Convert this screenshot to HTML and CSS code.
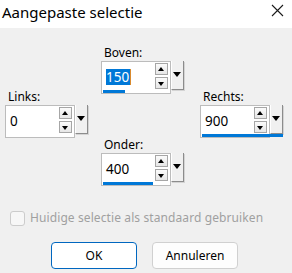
FILE: index.html
```html
<!DOCTYPE html>
<html lang="nl">

<head>
    <meta charset="UTF-8">
    <meta name="viewport" content="width=device-width, initial-scale=1.0">
    <title>Aangepaste selectie</title>
    <link rel="stylesheet" href="styles.css">
</head>

<body>
    <div class="dialog">
        <div class="titlebar">
            <span class="title">Aangepaste selectie</span>
            <svg class="close" width="13" height="13" viewBox="0 0 13 13">
                <path d="M1 1 L12 12 M12 1 L1 12" stroke="#1b1b1b" stroke-width="1.1" fill="none" />
            </svg>
        </div>
        <div class="content">
            <div class="fields">
                <div class="field field-top">
                    <span class="field-label">Boven:</span>
                    <div class="spin">
                        <div class="spin-box">
                            <span class="spin-value"><span class="selected">150</span><i class="caret"></i></span>
                            <div class="spin-arrows">
                                <span class="arrow arrow-up"></span>
                                <span class="arrow arrow-down"></span>
                            </div>
                        </div>
                        <span class="spin-drop"></span>
                        <span class="spin-bar" style="width: 22px"></span>
                    </div>
                </div>
                <div class="field field-left">
                    <span class="field-label">Links:</span>
                    <div class="spin">
                        <div class="spin-box">
                            <span class="spin-value">0</span>
                            <div class="spin-arrows">
                                <span class="arrow arrow-up"></span>
                                <span class="arrow arrow-down"></span>
                            </div>
                        </div>
                        <span class="spin-drop"></span>
                    </div>
                </div>
                <div class="field field-right">
                    <span class="field-label">Rechts:</span>
                    <div class="spin">
                        <div class="spin-box">
                            <span class="spin-value">900</span>
                            <div class="spin-arrows">
                                <span class="arrow arrow-up"></span>
                                <span class="arrow arrow-down"></span>
                            </div>
                        </div>
                        <span class="spin-drop"></span>
                        <span class="spin-bar" style="width: 81px"></span>
                    </div>
                </div>
                <div class="field field-bottom">
                    <span class="field-label">Onder:</span>
                    <div class="spin">
                        <div class="spin-box">
                            <span class="spin-value">400</span>
                            <div class="spin-arrows">
                                <span class="arrow arrow-up"></span>
                                <span class="arrow arrow-down"></span>
                            </div>
                        </div>
                        <span class="spin-drop"></span>
                        <span class="spin-bar" style="width: 50px"></span>
                    </div>
                </div>
            </div>
            <label class="check">
                <span class="check-box"></span>
                Huidige selectie als standaard gebruiken
            </label>
            <div class="buttons">
                <button class="btn btn-primary">OK</button>
                <button class="btn">Annuleren</button>
            </div>
        </div>
    </div>
</body>

</html>
```

FILE: styles.css
```css
body {
    margin: 0;
    font-family: "Noto Sans", "Liberation Sans", sans-serif;
    color: #000;
}

.dialog {
    width: 292px;
    height: 273px;
    background: #f0f0f0;
    overflow: hidden;
}

.titlebar {
    height: 28px;
    background: #fff;
    display: flex;
    justify-content: space-between;
    align-items: center;
    padding: 0 8px 0 2px;
}

.title {
    font-size: 15px;
    line-height: 20px;
    margin-top: -4px;
    color: #000;
}

.close {
    margin-top: -8px;
}

.content {
    padding-top: 17px;
}

/* spin fields */
.fields {
    display: grid;
    grid-template-columns: 96px 99px 83px;
    grid-template-rows: 44px 48px auto;
    padding-left: 5px;
}

.field-top {
    grid-column: 2;
    grid-row: 1 / span 2;
}

.field-left {
    grid-column: 1;
    grid-row: 2 / span 2;
}

.field-right {
    grid-column: 3;
    grid-row: 2 / span 2;
}

.field-bottom {
    grid-column: 2;
    grid-row: 3;
}

.field-label {
    display: block;
    font-size: 12px;
    line-height: 15px;
    padding-left: 3px;
    margin-bottom: 1px;
}

.spin {
    position: relative;
    display: flex;
    width: 83px;
    height: 33px;
}

.spin-box {
    height: 31px;
    background: #fff;
    border: 1px solid #bcbcbc;
    display: flex;
    align-items: center;
    justify-content: space-between;
    padding: 0 2px 0 4px;
    box-sizing: content-box;
    width: 64px;
}

.spin-value {
    font-size: 13.5px;
    line-height: 16px;
    display: flex;
    align-items: center;
    margin-top: -1px;
}

.selected {
    background: #0078d7;
    color: #fff;
    padding: 0 1px 0 0;
}

.caret {
    display: inline-block;
    width: 1px;
    height: 16px;
    background: #d98a2e;
}

.spin-arrows {
    display: flex;
    flex-direction: column;
    gap: 2px;
    margin-top: -3px;
}

.arrow {
    position: relative;
    width: 11px;
    height: 10px;
    border: 1px solid #a6a6a6;
    background: linear-gradient(#fbfbfb, #e6e6e6);
}

.arrow::after {
    content: "";
    position: absolute;
    left: 2px;
    border-left: 3.5px solid transparent;
    border-right: 3.5px solid transparent;
}

.arrow-up::after {
    top: 3px;
    border-bottom: 4px solid #000;
}

.arrow-down::after {
    top: 4px;
    border-top: 4px solid #000;
}

.spin-drop {
    position: relative;
    width: 11px;
    height: 28px;
    background: #f0f0f0;
    border-left: 1px solid #fff;
    border-right: 1px solid #8c8c8c;
    border-bottom: 1px solid #8c8c8c;
    box-shadow: 1px 1px 0 #d4d4d4;
}

.spin-drop::after {
    content: "";
    position: absolute;
    top: 11px;
    left: 1px;
    border-left: 4.5px solid transparent;
    border-right: 4.5px solid transparent;
    border-top: 5px solid #000;
}

.spin-bar {
    position: absolute;
    left: 2px;
    bottom: 1px;
    height: 3px;
    background: #0078d7;
}

/* checkbox */
.check {
    display: flex;
    align-items: center;
    gap: 5px;
    margin: 24px 0 0 10px;
    font-size: 12px;
    line-height: 16px;
    letter-spacing: 0.1px;
    color: #a0a0a0;
}

.check-box {
    width: 13px;
    height: 13px;
    border: 1px solid #cccccc;
    border-radius: 3px;
    background: #f7f7f7;
}

/* buttons */
.buttons {
    display: flex;
    justify-content: center;
    gap: 15px;
    margin-top: 16px;
    padding-right: 3px;
}

.btn {
    width: 86px;
    height: 27px;
    font-family: inherit;
    font-size: 12px;
    color: #000;
    background: #fdfdfd;
    border: 1px solid #d0d0d0;
    border-radius: 4px;
}

.btn-primary {
    border-color: #0067c0;
    background: #fff;
}
```
